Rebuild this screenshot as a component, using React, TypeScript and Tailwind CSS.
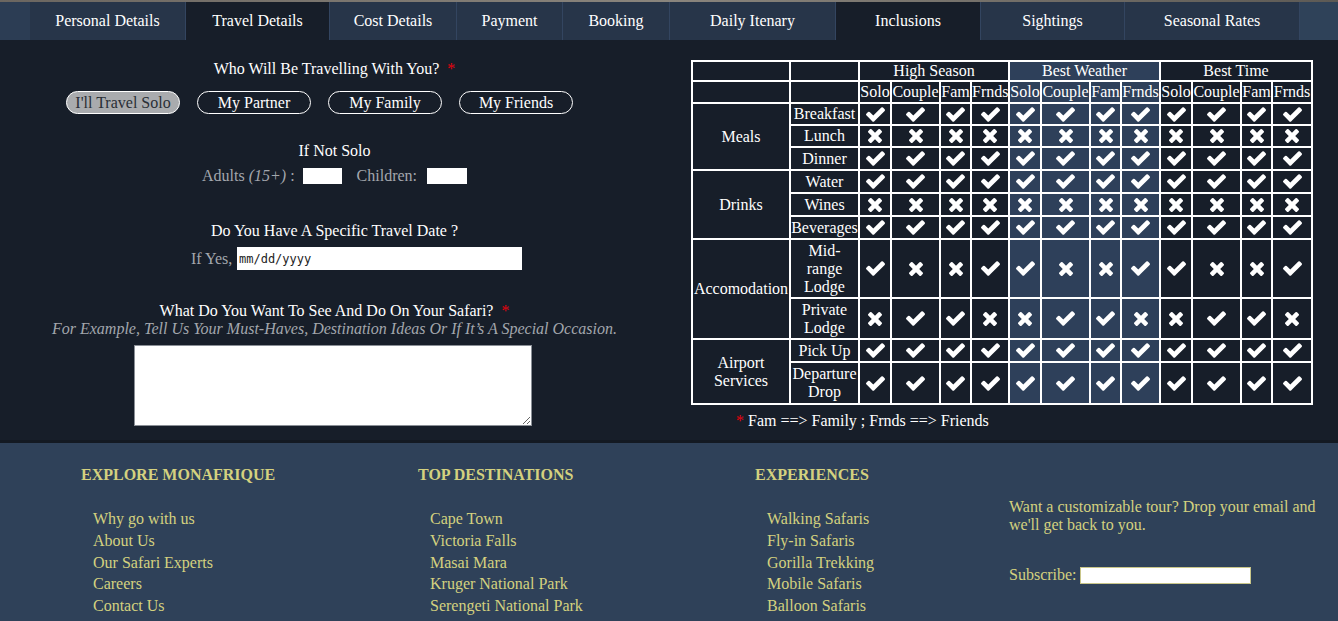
import React from 'react';

const tabs = [
  { label: 'Personal Details', w: 'w-[156px]' },
  { label: 'Travel Details', w: 'w-[144px]', active: true },
  { label: 'Cost Details', w: 'w-[127px]' },
  { label: 'Payment', w: 'w-[106px]' },
  { label: 'Booking', w: 'w-[107px]' },
  { label: 'Daily Itenary', w: 'w-[166px]' },
  { label: 'Inclusions', w: 'w-[145px]', active: true },
  { label: 'Sightings', w: 'w-[144px]' },
  { label: 'Seasonal Rates', w: 'w-[175px]' },
];

const travelOptions = ["I'll Travel Solo", 'My Partner', 'My Family', 'My Friends'];

type Row = { group?: string; span?: number; item: string; h: number; marks: boolean[] };

const rows: Row[] = [
  { group: 'Meals', span: 3, item: 'Breakfast', h: 22, marks: [true, true, true, true] },
  { item: 'Lunch', h: 22, marks: [false, false, false, false] },
  { item: 'Dinner', h: 23, marks: [true, true, true, true] },
  { group: 'Drinks', span: 3, item: 'Water', h: 23, marks: [true, true, true, true] },
  { item: 'Wines', h: 23, marks: [false, false, false, false] },
  { item: 'Beverages', h: 23, marks: [true, true, true, true] },
  { group: 'Accomodation', span: 2, item: 'Mid-range Lodge', h: 59, marks: [true, false, false, true] },
  { item: 'Private Lodge', h: 41, marks: [false, true, true, false] },
  { group: 'Airport Services', span: 2, item: 'Pick Up', h: 23, marks: [true, true, true, true] },
  { item: 'Departure Drop', h: 42, marks: [true, true, true, true] },
];

const seasons = ['High Season', 'Best Weather', 'Best Time'];
const subCols = ['Solo', 'Couple', 'Fam', 'Frnds'];
const colWidths = [98, 69, 32, 49, 31, 38, 32, 49, 31, 39, 32, 49, 31, 40];

const footerCols = [
  { title: 'EXPLORE MONAFRIQUE', w: 'w-[337px]', links: ['Why go with us', 'About Us', 'Our Safari Experts', 'Careers', 'Contact Us'] },
  { title: 'TOP DESTINATIONS', w: 'w-[337px]', links: ['Cape Town', 'Victoria Falls', 'Masai Mara', 'Kruger National Park', 'Serengeti National Park'] },
  { title: 'EXPERIENCES', w: 'w-[254px]', links: ['Walking Safaris', 'Fly-in Safaris', 'Gorilla Trekking', 'Mobile Safaris', 'Balloon Safaris'] },
];

// font-awesome 4 style check / times glyphs
const Mark = ({ ok }: { ok: boolean }) =>
  ok ? (
    <svg viewBox="121 334 1550 1188" width="19" height="15" className="mx-auto block fill-white">
      <path d="M1671 566q0 40-28 68l-724 724-136 136q-28 28-68 28t-68-28l-136-136-362-362q-28-28-28-68t28-68l136-136q28-28 68-28t68 28l294 295 656-657q28-28 68-28t68 28l136 136q28 28 28 68z" />
    </svg>
  ) : (
    <svg viewBox="110 366 1188 1188" width="14" height="14" className="mx-auto block fill-white">
      <path d="M1298 1322q0 40-28 68l-136 136q-28 28-68 28t-68-28l-294-294-294 294q-28 28-68 28t-68-28l-136-136q-28-28-28-68t28-68l294-294-294-294q-28-28-28-68t28-68l136-136q28-28 68-28t68 28l294 294 294-294q28-28 68-28t68 28l136 136q28 28 28 68t-28 68l-294 294 294 294q28 28 28 68z" />
    </svg>
  );

const cell = 'border-2 border-white p-0 text-center align-middle';

export default function App() {
  return (
    <div className="min-h-screen bg-[#171e29] text-white" style={{ fontFamily: '"Liberation Serif", "Times New Roman", serif' }}>
      {/* tab strip */}
      <div className="h-[2px] bg-gradient-to-r from-[#6b6660] via-[#8a857d] to-[#5d5a55]" />
      <nav className="flex h-[38px] bg-[#2f4259]">
        <div className="w-[30px] bg-[#2c3d54]" />
        {tabs.map(t => (
          <div
            key={t.label}
            className={`${t.w} flex items-center justify-center border-r border-[#334560] pb-[1px] text-[16px] ${t.active ? 'bg-[#171e29]' : 'bg-[#273549]'}`}
          >
            {t.label}
          </div>
        ))}
      </nav>

      <main className="flex h-[400px]">
        {/* left form */}
        <section className="w-[669px] text-[16px] leading-[18px]">
          <div className="mt-[20px] text-center">
            Who Will Be Travelling With You? <span className="ml-1 text-red-600">*</span>
          </div>
          <div className="mt-[13px] flex gap-[17px] pl-[66px]">
            {travelOptions.map((o, i) => (
              <button
                key={o}
                className={`h-[23px] w-[114px] rounded-full border border-white text-[16px] leading-none ${i === 0 ? 'bg-[#a9abae] text-[#2a2f36]' : 'text-white'}`}
              >
                {o}
              </button>
            ))}
          </div>

          <div className="mt-[28px] text-center">If Not Solo</div>
          <div className="mt-[7px] flex items-center pl-[202px] text-[#a3a7ad]">
            <span>Adults <i>(15+)</i> :</span>
            <input className="ml-[8px] h-[16px] w-[39px] bg-white" />
            <span className="ml-[15px]">Children:</span>
            <input className="ml-[10px] h-[16px] w-[40px] bg-white" />
          </div>

          <div className="mt-[37px] text-center">Do You Have A Specific Travel Date ?</div>
          <div className="mt-[7px] flex items-center pl-[191px] text-[#a3a7ad]">
            <span className="w-[46px]">If Yes,</span>
            <input
              readOnly
              value="mm/dd/yyyy"
              className="h-[23px] w-[285px] bg-white px-[2px] text-[12px] text-[#222]"
              style={{ fontFamily: '"DejaVu Sans Mono", "Liberation Mono", monospace' }}
            />
          </div>

          <div className="mt-[32px] text-center">
            What Do You Want To See And Do On Your Safari? <span className="ml-1 text-red-600">*</span>
          </div>
          <div className="text-center italic text-[#a3a7ad]">
            For Example, Tell Us Your Must-Haves, Destination Ideas Or If It’s A Special Occasion.
          </div>
          <div className="mt-[7px] pl-[134px]">
            <textarea className="block h-[81px] w-[398px] border border-[#8a8f96] bg-white" />
          </div>
        </section>

        {/* inclusions table */}
        <section className="w-[669px] pt-[20px] text-[16px] leading-[18px]">
          <table className="ml-[22px] w-[620px] table-fixed border-collapse border-2 border-white">
            <colgroup>
              {colWidths.map((w, i) => <col key={i} style={{ width: w }} />)}
            </colgroup>
            <thead>
              <tr className="h-[20px]">
                <th className={cell} />
                <th className={cell} />
                {seasons.map((s, i) => (
                  <th key={s} colSpan={4} className={`${cell} font-normal ${i === 1 ? 'bg-[#2e405a]' : ''}`}>{s}</th>
                ))}
              </tr>
              <tr className="h-[22px]">
                <th className={cell} />
                <th className={cell} />
                {seasons.map((s, si) =>
                  subCols.map(c => (
                    <th key={s + c} className={`${cell} overflow-visible whitespace-nowrap font-normal ${si === 1 ? 'bg-[#2e405a]' : ''}`}>{c}</th>
                  ))
                )}
              </tr>
            </thead>
            <tbody>
              {rows.map(r => (
                <tr key={r.item} style={{ height: r.h }}>
                  {r.group && <td rowSpan={r.span} className={cell}>{r.group}</td>}
                  <td className={cell}>{r.item}</td>
                  {seasons.map((s, si) =>
                    r.marks.map((m, mi) => (
                      <td key={s + mi} className={`${cell} ${si === 1 ? 'bg-[#2e405a]' : ''}`}>
                        <Mark ok={m} />
                      </td>
                    ))
                  )}
                </tr>
              ))}
            </tbody>
          </table>
          <div className="mt-[7px] pl-[67px]">
            <span className="text-red-600">*</span> Fam ==&gt; Family ; Frnds ==&gt; Friends
          </div>
        </section>
      </main>

      <footer className="h-[181px] border-t-[3px] border-[#131922] bg-[#2f4159] text-[#d4d17f]">
        <div className="flex pl-[81px] pt-[23px]">
          {footerCols.map(c => (
            <div key={c.title} className={c.w}>
              <h3 className="text-[16px] font-bold leading-[18px]">{c.title}</h3>
              <ul className="mt-[24px] pl-[12px] text-[16px] leading-[21.75px]">
                {c.links.map(l => <li key={l}>{l}</li>)}
              </ul>
            </div>
          ))}
          <div className="w-[316px] pt-[32px] text-[16px] leading-[18px]">
            <p>Want a customizable tour? Drop your email and we'll get back to you.</p>
            <div className="mt-[32px] flex items-center">
              <span>Subscribe:</span>
              <input className="ml-[3px] h-[17px] w-[171px] border border-[#c9c68a] bg-white" />
            </div>
          </div>
        </div>
      </footer>
    </div>
  );
}
